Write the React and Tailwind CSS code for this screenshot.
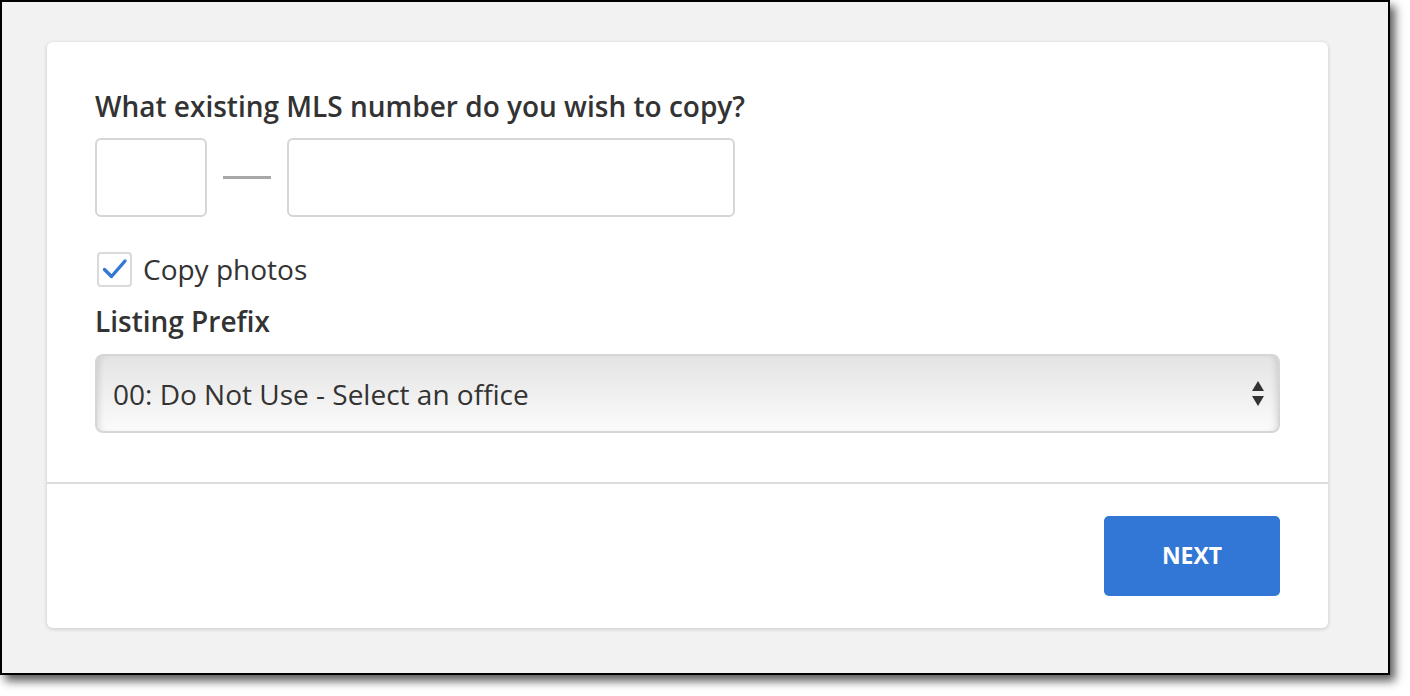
import React from 'react';

function Arrows() {
  return (
    <svg width="12" height="26" viewBox="0 0 12 26" className="text-[#333]">
      <path d="M6 0 L12 10 L0 10 Z" fill="currentColor" />
      <path d="M0 15 L12 15 L6 25 Z" fill="currentColor" />
    </svg>
  );
}

export default function App() {
  return (
    <div className="w-[1410px] h-[696px] bg-white font-['Open_Sans',sans-serif] text-[#333]">
      <div className="w-[1390px] h-[675px] border-2 border-black bg-[#f2f2f2] shadow-[5px_6px_9px_rgba(0,0,0,0.65)] pt-[40px] pl-[45px]">
        {/* card */}
        <div className="w-[1281px] h-[586px] bg-white rounded-md shadow-[0_1px_4px_rgba(0,0,0,0.18)] flex flex-col">
          <div className="px-[48px] pt-[45px] h-[440px]">
            <h2 className="text-[28px] leading-[38px] font-semibold">What existing MLS number do you wish to copy?</h2>
            <div className="flex items-center mt-[13px]">
              <div className="w-[112px] h-[79px] border-2 border-[#d6d6d6] rounded-md bg-white" />
              <div className="w-[48px] h-[3px] bg-[#a8a8a8] mx-[16px]" />
              <div className="w-[448px] h-[79px] border-2 border-[#d6d6d6] rounded-md bg-white" />
            </div>
            <label className="flex items-center mt-[34px] ml-[2px] h-[36px]">
              <span className="w-[35px] h-[35px] border-2 border-[#dadada] rounded-[4px] flex items-center justify-center">
                <svg width="26" height="22" viewBox="0 0 26 22">
                  <path d="M2.5 11.5 L9.5 18.5 L23 3" fill="none" stroke="#3478d4" strokeWidth="3.4" strokeLinecap="round" strokeLinejoin="round" />
                </svg>
              </span>
              <span className="ml-[11px] text-[28px] leading-[38px]">Copy photos</span>
            </label>
            <h3 className="text-[28px] leading-[38px] font-semibold mt-[15px]">Listing Prefix</h3>
            <div className="mt-[14px] w-[1185px] h-[79px] border-2 border-[#d6d6d6] rounded-[8px] bg-gradient-to-b from-[#e4e4e4] to-[#fbfbfb] shadow-[inset_6px_0_6px_-4px_rgba(0,0,0,0.12),inset_-6px_0_6px_-4px_rgba(0,0,0,0.12)] flex items-center justify-between pl-[16px] pr-[14px]">
              <span className="text-[28px] leading-[38px]">00: Do Not Use - Select an office</span>
              <Arrows />
            </div>
          </div>
          <div className="h-[2px] bg-[#dcdcdc]" />
          <div className="flex justify-end pr-[48px] pt-[32px]">
            <button className="w-[176px] h-[80px] bg-[#3276d6] rounded-[5px] text-white text-[23px] font-bold pb-[2px]">NEXT</button>
          </div>
        </div>
      </div>
    </div>
  );
}
